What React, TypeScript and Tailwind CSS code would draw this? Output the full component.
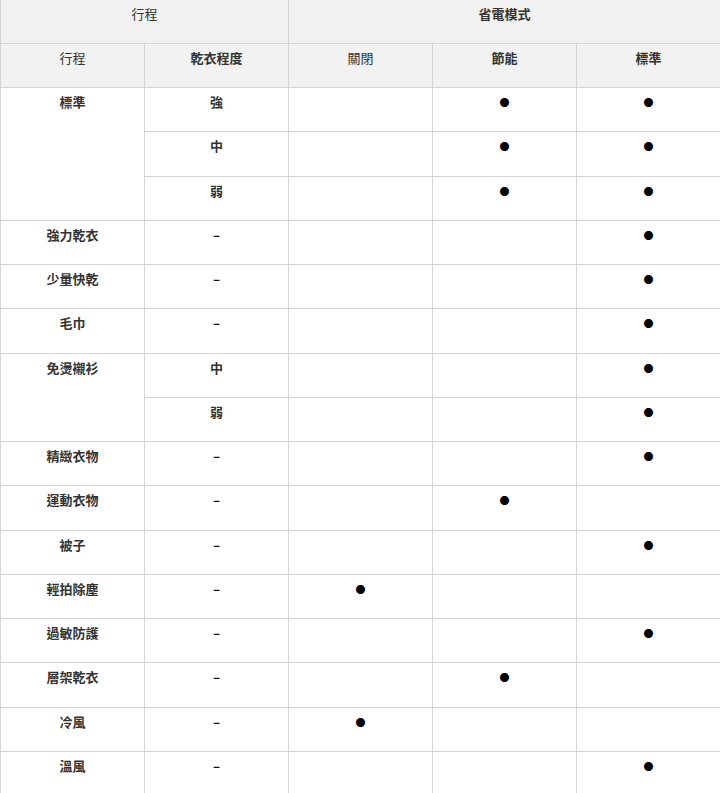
const rows: { name: string; span?: number; level: string; marks: [boolean, boolean, boolean] }[] = [
  { name: '標準', span: 3, level: '強', marks: [false, true, true] },
  { name: '', level: '中', marks: [false, true, true] },
  { name: '', level: '弱', marks: [false, true, true] },
  { name: '強力乾衣', level: '–', marks: [false, false, true] },
  { name: '少量快乾', level: '–', marks: [false, false, true] },
  { name: '毛巾', level: '–', marks: [false, false, true] },
  { name: '免燙襯衫', span: 2, level: '中', marks: [false, false, true] },
  { name: '', level: '弱', marks: [false, false, true] },
  { name: '精緻衣物', level: '–', marks: [false, false, true] },
  { name: '運動衣物', level: '–', marks: [false, true, false] },
  { name: '被子', level: '–', marks: [false, false, true] },
  { name: '輕拍除塵', level: '–', marks: [true, false, false] },
  { name: '過敏防護', level: '–', marks: [false, false, true] },
  { name: '層架乾衣', level: '–', marks: [false, true, false] },
  { name: '冷風', level: '–', marks: [true, false, false] },
  { name: '溫風', level: '–', marks: [false, false, true] },
];

const base = 'border border-[#d4d4d4] align-top text-center pt-[4px] px-2';
const head = `${base} h-[44px] bg-[#f2f2f2]`;
const cell = `${base} h-[44.25px]`;

export default function App() {
  return (
    <div className="w-[720px] h-[793px] overflow-hidden bg-white">
      <table
        className="w-[721px] -mt-px table-fixed border-collapse text-[13px] leading-[20px] text-[#333]"
        style={{ fontFamily: '"Noto Sans CJK TC", "Noto Sans", sans-serif' }}
      >
        <thead>
          <tr>
            <th colSpan={2} className={`${head} font-normal`}>行程</th>
            <th colSpan={3} className={`${head} font-bold`}>省電模式</th>
          </tr>
          <tr>
            <th className={`${head} font-normal`}>行程</th>
            <th className={`${head} font-bold`}>乾衣程度</th>
            <th className={`${head} font-normal`}>關閉</th>
            <th className={`${head} font-bold`}>節能</th>
            <th className={`${head} font-bold`}>標準</th>
          </tr>
        </thead>
        <tbody className="font-bold">
          {rows.map((r, i) => (
            <tr key={i}>
              {r.name && (
                <td rowSpan={r.span ?? 1} className={cell}>
                  {r.name}
                </td>
              )}
              <td className={`${cell} ${r.level === '–' ? 'text-[#111]' : ''}`}>{r.level}</td>
              {r.marks.map((m, j) => (
                <td key={j} className={cell}>
                  {m ? <span className="text-[10px] text-black">●</span> : null}
                </td>
              ))}
            </tr>
          ))}
        </tbody>
      </table>
    </div>
  );
}
